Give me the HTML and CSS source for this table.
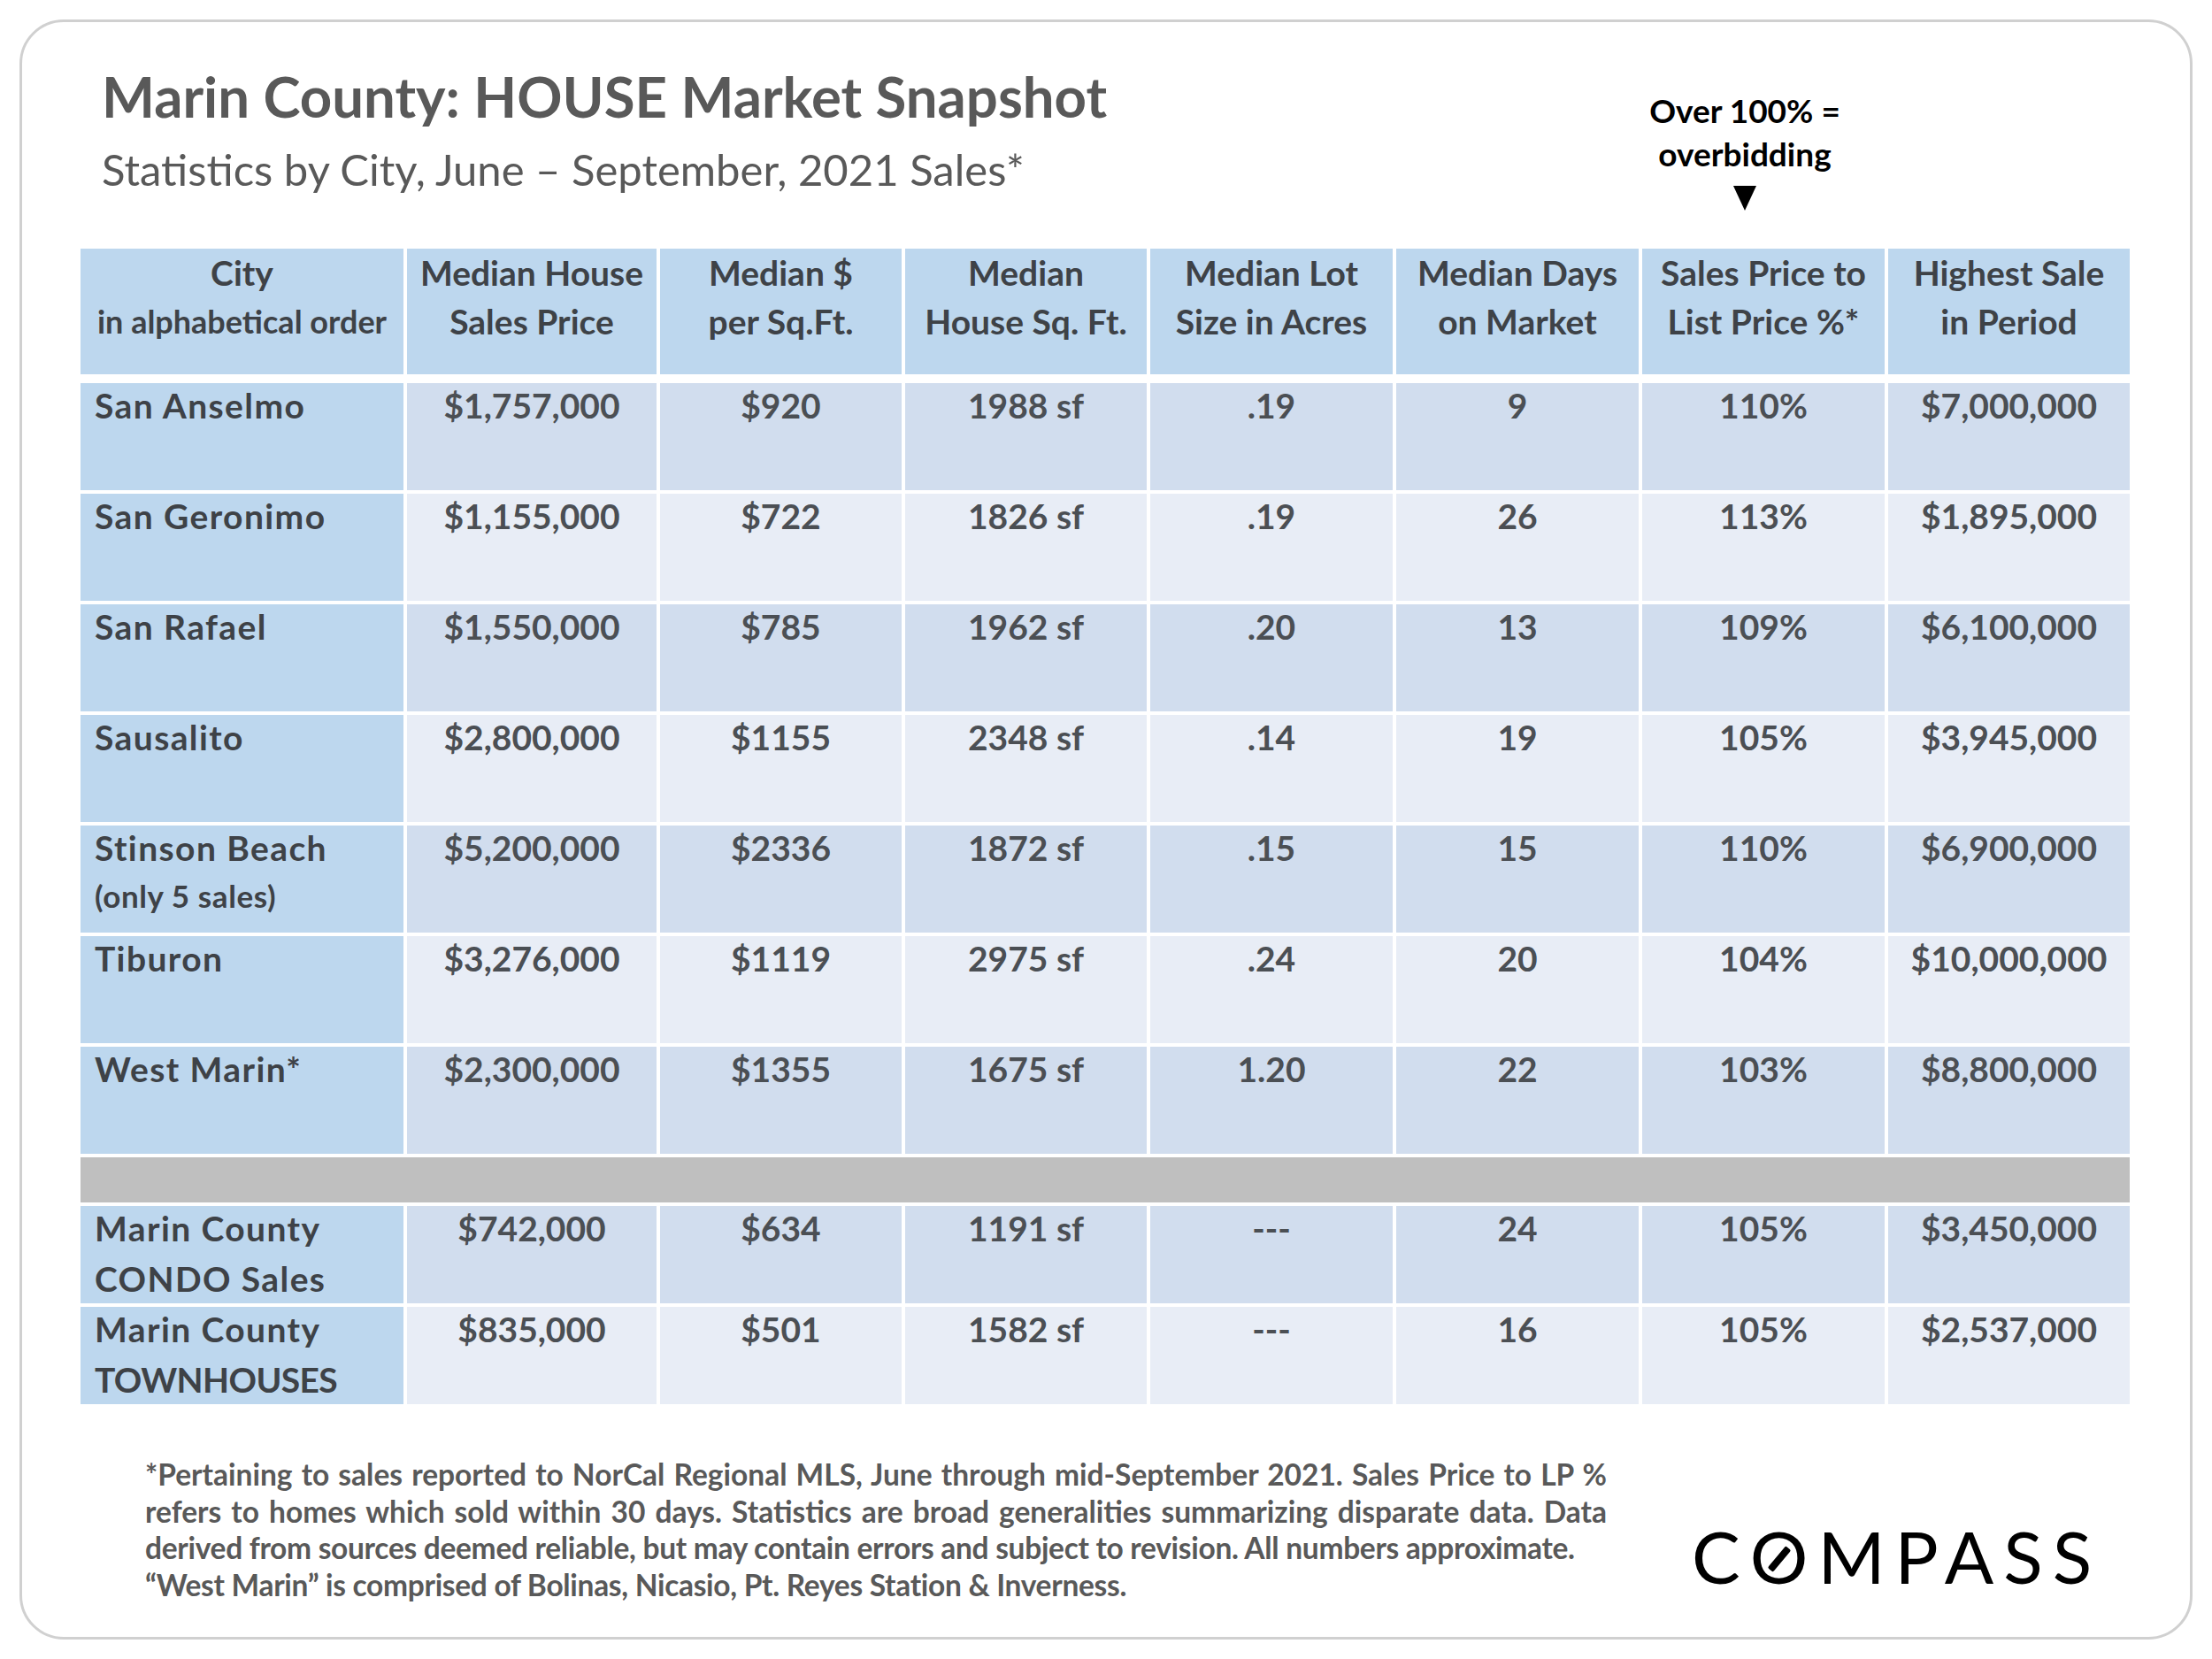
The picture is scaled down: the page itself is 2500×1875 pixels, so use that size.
FILE: index.html
```html
<!DOCTYPE html>
<html lang="en">
<head>
<meta charset="utf-8">
<title>Marin County: HOUSE Market Snapshot</title>
<link rel="stylesheet" href="styles.css">
</head>
<body>
<div class="card">
  <header class="top">
    <div class="titles">
      <h1 class="title">Marin County: HOUSE Market Snapshot</h1>
      <p class="subtitle">Statistics by City, June – September, 2021 Sales*</p>
    </div>
    <div class="note">
      <div>Over 100% =</div>
      <div>overbidding</div>
      <div class="arrow"></div>
    </div>
  </header>

  <div class="table">
    <div class="row head">
      <div class="cell"><span class="l1">City</span><span class="l2 small">in alphabetical order</span></div>
      <div class="cell"><span class="l1">Median House</span><span class="l2">Sales Price</span></div>
      <div class="cell"><span class="l1">Median $</span><span class="l2">per Sq.Ft.</span></div>
      <div class="cell"><span class="l1">Median</span><span class="l2">House Sq. Ft.</span></div>
      <div class="cell"><span class="l1">Median Lot</span><span class="l2">Size in Acres</span></div>
      <div class="cell"><span class="l1">Median Days</span><span class="l2">on Market</span></div>
      <div class="cell"><span class="l1">Sales Price to</span><span class="l2">List Price %*</span></div>
      <div class="cell"><span class="l1">Highest Sale</span><span class="l2">in Period</span></div>
    </div>

    <div class="row data odd">
      <div class="cell name">San Anselmo</div>
      <div class="cell">$1,757,000</div><div class="cell">$920</div><div class="cell">1988 sf</div><div class="cell">.19</div><div class="cell">9</div><div class="cell">110%</div><div class="cell">$7,000,000</div>
    </div>
    <div class="row data even">
      <div class="cell name">San Geronimo</div>
      <div class="cell">$1,155,000</div><div class="cell">$722</div><div class="cell">1826 sf</div><div class="cell">.19</div><div class="cell">26</div><div class="cell">113%</div><div class="cell">$1,895,000</div>
    </div>
    <div class="row data odd">
      <div class="cell name">San Rafael</div>
      <div class="cell">$1,550,000</div><div class="cell">$785</div><div class="cell">1962 sf</div><div class="cell">.20</div><div class="cell">13</div><div class="cell">109%</div><div class="cell">$6,100,000</div>
    </div>
    <div class="row data even">
      <div class="cell name">Sausalito</div>
      <div class="cell">$2,800,000</div><div class="cell">$1155</div><div class="cell">2348 sf</div><div class="cell">.14</div><div class="cell">19</div><div class="cell">105%</div><div class="cell">$3,945,000</div>
    </div>
    <div class="row data odd">
      <div class="cell name">Stinson Beach<span class="sub">(only 5 sales)</span></div>
      <div class="cell">$5,200,000</div><div class="cell">$2336</div><div class="cell">1872 sf</div><div class="cell">.15</div><div class="cell">15</div><div class="cell">110%</div><div class="cell">$6,900,000</div>
    </div>
    <div class="row data even">
      <div class="cell name">Tiburon</div>
      <div class="cell">$3,276,000</div><div class="cell">$1119</div><div class="cell">2975 sf</div><div class="cell">.24</div><div class="cell">20</div><div class="cell">104%</div><div class="cell">$10,000,000</div>
    </div>
    <div class="row data odd">
      <div class="cell name">West Marin*</div>
      <div class="cell">$2,300,000</div><div class="cell">$1355</div><div class="cell">1675 sf</div><div class="cell">1.20</div><div class="cell">22</div><div class="cell">103%</div><div class="cell">$8,800,000</div>
    </div>

    <div class="sep"></div>

    <div class="row data sum odd">
      <div class="cell name">Marin County<span class="second">CONDO Sales</span></div>
      <div class="cell">$742,000</div><div class="cell">$634</div><div class="cell">1191 sf</div><div class="cell">---</div><div class="cell">24</div><div class="cell">105%</div><div class="cell">$3,450,000</div>
    </div>
    <div class="row data sum even">
      <div class="cell name">Marin County<span class="second caps">TOWNHOUSES</span></div>
      <div class="cell">$835,000</div><div class="cell">$501</div><div class="cell">1582 sf</div><div class="cell">---</div><div class="cell">16</div><div class="cell">105%</div><div class="cell">$2,537,000</div>
    </div>
  </div>

  <footer class="foot">
    <div class="notes">
      <p class="line just">*Pertaining to sales reported to NorCal Regional MLS, June through mid-September 2021. Sales Price to LP %</p>
      <p class="line just">refers to homes which sold within 30 days. Statistics are broad generalities summarizing disparate data. Data</p>
      <p class="line tight">derived from sources deemed reliable, but may contain errors and subject to revision. All numbers approximate.</p>
      <p class="line tight">“West Marin” is comprised of Bolinas, Nicasio, Pt. Reyes Station &amp; Inverness.</p>
    </div>
    <div class="logo">C<span class="o">O</span>MPASS</div>
  </footer>
</div>
</body>
</html>
```

FILE: styles.css
```css
* { box-sizing: border-box; }

html, body {
  margin: 0;
  padding: 0;
  background: #ffffff;
}

body {
  font-family: Lato, "Open Sans", "Liberation Sans", sans-serif;
}

.card {
  margin: 22px;
  width: 2456px;
  height: 1831px;
  border: 3px solid #d0d0d0;
  border-radius: 50px;
  padding: 52px 68px 0 66px;
  background: #ffffff;
}

/* ---------- heading ---------- */
.top {
  display: flex;
  justify-content: space-between;
  align-items: flex-start;
}

.title {
  margin: 0 0 0 24px;
  font-weight: 700;
  font-size: 63.5px;
  line-height: 63px;
  color: #595959;
  white-space: nowrap;
}

.subtitle {
  margin: 23px 0 0 24px;
  font-weight: 400;
  font-size: 49px;
  line-height: 56px;
  color: #595959;
  white-space: nowrap;
}

.note {
  width: 300px;
  margin: 23px 285px 0 0;
  text-align: center;
  font-weight: 700;
  font-size: 37px;
  line-height: 49px;
  color: #000000;
}

.arrow {
  width: 0;
  height: 0;
  margin: 12px auto 0;
  border-left: 13.5px solid transparent;
  border-right: 13.5px solid transparent;
  border-top: 28px solid #000000;
}

/* ---------- table ---------- */
.table {
  margin-top: 43px;
  width: 2316px;
  display: flex;
  flex-direction: column;
  gap: 4px;
}

.row {
  display: grid;
  grid-template-columns: 365px 282px 273px 273px 274px 274px 274px 273px;
  column-gap: 4px;
}

.cell {
  text-align: center;
  font-weight: 700;
  font-size: 39px;
  line-height: 50px;
  color: #4b4f54;
  white-space: nowrap;
}

.head {
  height: 142px;
  margin-bottom: 6px;
}

.head .cell {
  background: #bdd7ee;
  color: #3e4247;
  line-height: 55px;
}

.head .l1,
.head .l2 {
  display: block;
}

.head .small {
  font-size: 36px;
}

.data {
  height: 121px;
}

.data.sum {
  height: 110px;
}

.odd .cell { background: #d1ddee; }
.even .cell { background: #e8edf6; }

.data .cell.name {
  background: #bdd7ee;
  text-align: left;
  padding-left: 16px;
  color: #3e4247;
  letter-spacing: 1.4px;
}

.name .sub {
  display: block;
  margin-top: 9px;
  font-size: 35px;
  line-height: 40px;
  letter-spacing: 0.6px;
}

.name .second {
  display: block;
  margin-top: 7px;
}

.name .caps {
  letter-spacing: -0.6px;
}

.sep {
  height: 51px;
  background: #bfbfbf;
}

/* ---------- footer ---------- */
.foot {
  display: flex;
  align-items: flex-start;
  margin-top: 59px;
}

.notes {
  margin-left: 73px;
  width: 1652px;
  flex: none;
  color: #595959;
  font-weight: 700;
  font-size: 33.5px;
  line-height: 41.5px;
}

.line {
  margin: 0;
  white-space: nowrap;
}

.line.just {
  white-space: normal;
  text-align: justify;
  text-align-last: justify;
}

.line.tight {
  letter-spacing: -0.3px;
}

.logo {
  margin: 71px 0 0 96px;
  font-family: Lato, "DejaVu Sans", sans-serif;
  font-weight: 400;
  font-size: 82px;
  line-height: 82px;
  letter-spacing: 11px;
  color: #000000;
  white-space: nowrap;
}

.logo .o {
  position: relative;
  display: inline-block;
}

.logo .o::after {
  content: "";
  position: absolute;
  left: 50%;
  top: 50%;
  width: 8px;
  height: 32px;
  margin: -12px 0 0 -9px;
  background: #000000;
  border-radius: 2px;
  transform: rotate(40deg);
}
```
